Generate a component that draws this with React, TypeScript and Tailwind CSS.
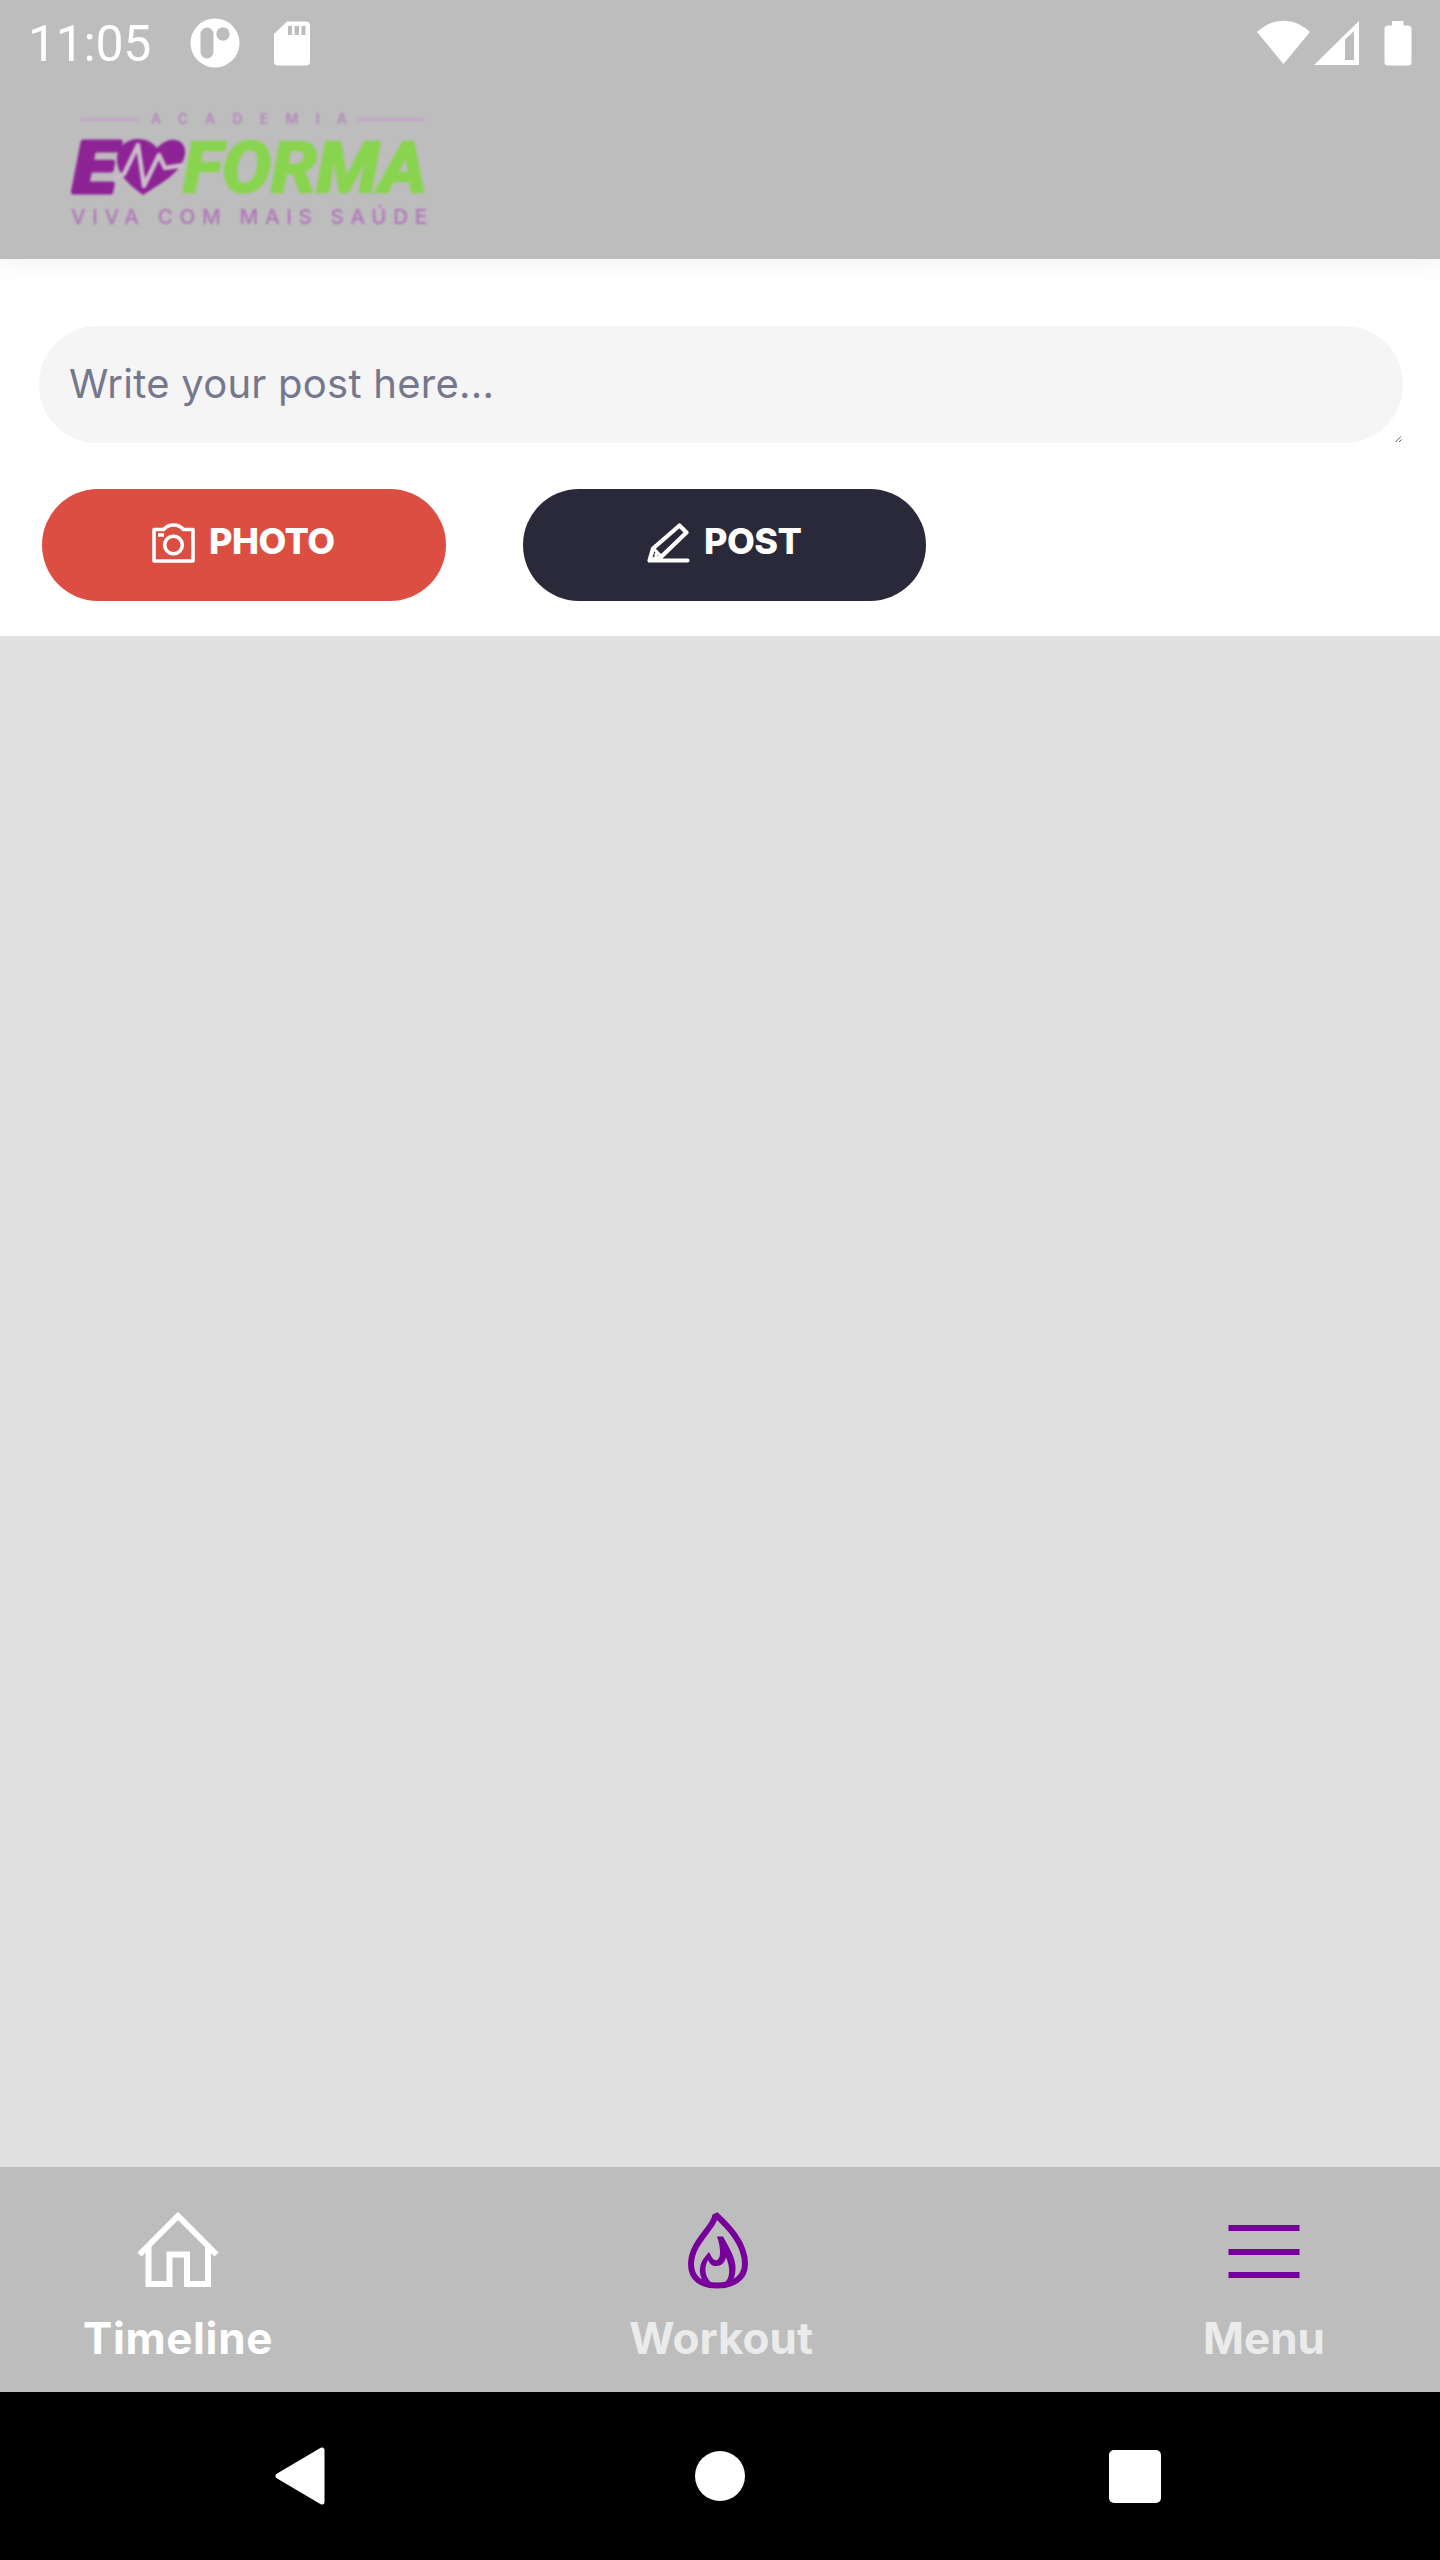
import type { ReactNode } from 'react'

function StatusBar() {
  return (
    <div className="flex h-[86px] items-center justify-between pl-7 pr-7 text-white">
      <div className="flex items-center">
        <span className="w-[162px] pt-0.5 font-['Roboto',sans-serif] text-[50px] leading-none tracking-[-0.3px]">11:05</span>
        <svg viewBox="0 0 50 50" className="h-[50px] w-[50px]" aria-hidden="true">
          <circle cx="25" cy="25" r="24.5" fill="white" />
          <rect x="10.5" y="9.5" width="13" height="31" rx="6.5" fill="#bdbdbd" />
          <circle cx="33" cy="16" r="6.7" fill="#bdbdbd" />
        </svg>
        <svg viewBox="0 0 36 45" className="ml-[34px] h-[45px] w-9" aria-hidden="true">
          <path d="M13 0.5H32a4 4 0 0 1 4 4V40.500a4 4 0 0 1-4 4H4a4 4 0 0 1-4-4V13z" fill="white" />
          <path d="M14 5h4v9h-4zM20.500 5h4.500v9h-4.500zM27.500 5h4v9h-4z" fill="#bdbdbd" />
        </svg>
      </div>
      <svg viewBox="0 0 156 48" className="h-12 w-[156px]" fill="white" aria-hidden="true">
        <path d="M1 13C17-2 38-2 54 13L27.500 45z" />
        <path fillRule="evenodd" d="M58 46L103 2V46zM89 20.500V41H98V12z" />
        <path d="M136 2h11.500v4.500H152a3.500 3.500 0 0 1 3.500 3.500V43a3.500 3.500 0 0 1-3.500 3.500H132a3.500 3.500 0 0 1-3.500-3.500V10a3.500 3.500 0 0 1 3.500-3.500h4z" />
      </svg>
    </div>
  )
}

function Logo() {
  return (
    <svg
      viewBox="60 100 380 140"
      className="ml-[60px] mt-[14px] h-[140px] w-[380px] overflow-visible font-['Inter',sans-serif] leading-none blur-[1.1px]"
    >
      <path d="M81 119.500H139M358 119.500H424" stroke="#c4a3c9" strokeWidth="3" />
      <text x="151" y="123.500" fontSize="14" fontWeight="600" fill="#b488bb" textLength="196">
        ACADEMIA
      </text>
      <g fontWeight="700" fontStyle="italic" fontSize="70" strokeWidth="5" strokeLinejoin="round" className="font-['Roboto',sans-serif]">
        <text x="73" y="192" fill="#8e2396" stroke="#8e2396" textLength="43" lengthAdjust="spacingAndGlyphs">
          E
        </text>
        <text x="183" y="192" fill="#88d44e" stroke="#88d44e" strokeWidth="2.500" textLength="244" lengthAdjust="spacingAndGlyphs">
          FORMA
        </text>
      </g>
      <path
        d="M143 195C130 185 117 175 117 159C117 147 127 139 138 139C147 139 153 143 157 148C163 142 169 139 175 140C184 141 187 150 184 158C179 174 160 184 143 195Z"
        fill="#8e2396"
      />
      <path d="M114 178L124 174L138 145L144 186L159 155L165 168L184 165" fill="none" stroke="#c9bdcb" strokeWidth="4.500" strokeLinejoin="round" />
      <text x="71" y="224" fontSize="20.500" fontWeight="500" fill="#b074b9" textLength="356">
        VIVA COM MAIS SAÚDE
      </text>
    </svg>
  )
}

function CameraIcon() {
  return (
    <svg viewBox="0 0 43 40" className="-mt-[5px] h-10 w-[43px]" fill="none" stroke="white" strokeWidth="3.600" aria-hidden="true">
      <path d="M2 6.500H11.500C14 3.500 17.500 2 21.500 2S29 3.500 31.500 6.500H41V38H2z" strokeLinejoin="round" />
      <circle cx="21.500" cy="22" r="8.800" />
      <path d="M6 12h6" strokeWidth="3.500" />
    </svg>
  )
}

function PencilIcon() {
  return (
    <svg
      viewBox="0 0 43 40"
      className="-mt-[5px] h-10 w-[43px]"
      fill="none"
      stroke="white"
      strokeWidth="4.200"
      strokeLinejoin="round"
      strokeLinecap="round"
      aria-hidden="true"
    >
      <path d="M40.500 37.500H2.500L6 25.500L32.500 2.500L39.500 9.500L14 34L2.500 37.500" />
      <path d="M7 26L14 33M9 35V31" strokeWidth="3" />
    </svg>
  )
}

function HomeIcon() {
  return (
    <svg viewBox="0 0 82 78" className="h-[78px] w-[82px]" fill="none" stroke="white" strokeWidth="6" aria-hidden="true">
      <path d="M2.500 43.500L41 5L79.500 43.500" />
      <path d="M11.500 36V73H32.500V43.500H50V73H71V36" />
    </svg>
  )
}

function FlameIcon() {
  return (
    <svg viewBox="0 -1 60 78" className="mr-[6px] h-[78px] w-[60px]" fill="none" stroke="#78009a" strokeWidth="6" aria-hidden="true">
      <path d="M27.500 2.500C27 15 3 30 3 52C3 67 14 73.500 29 73.500S57 67 57 52C57 31 40 14 27.500 2.500Z" strokeLinejoin="bevel" />
      <path
        d="M29 24.500H35C42 37 48 47 47.500 57C47.500 64 45 70 40 73L36 71C42 67 43 57 38 45C37 51 33 54 28 54C24 54 22 52 20 48C15 57 18 67 24 71L19 73C10 66 10 54 16 46L21 40C24 46 26 49 29 48C34 46 32 33 29 24.500Z"
        fill="#78009a"
        stroke="none"
      />
    </svg>
  )
}

function MenuIcon() {
  return (
    <svg viewBox="0 0 72 78" className="h-[78px] w-[72px]" stroke="#78009a" strokeWidth="6" aria-hidden="true">
      <path d="M0.500 17H71.500M0.500 41H71.500M0.500 64H71.500" />
    </svg>
  )
}

interface TabProps {
  icon: ReactNode
  label: string
  active?: boolean
}

function Tab({ icon, label, active }: TabProps) {
  return (
    <button className="flex w-48 flex-col items-center">
      {icon}
      <span
        className={`mt-[21px] text-[44px] font-bold leading-[56px] whitespace-nowrap ${active ? 'tracking-[0.6px] text-white' : 'text-[#ebebeb]'}`}
      >
        {label}
      </span>
    </button>
  )
}

export default function App() {
  return (
    <div className="flex h-[2560px] w-[1440px] flex-col overflow-hidden bg-[#e0e0e0] font-['Inter',sans-serif]">
      <header className="z-10 h-[259px] bg-[#bdbdbd] shadow-[0_2px_26px_rgba(0,0,0,0.07)]">
        <StatusBar />
        <Logo />
      </header>

      <section className="h-[377px] bg-white pt-[67px]">
        <div className="relative ml-[39px] w-[1364px]">
          <textarea
            rows={1}
            placeholder="Write your post here..."
            className="block h-[117px] w-full resize-none overflow-hidden rounded-[58px] bg-[#f5f5f5] pl-[30px] pt-[30px] text-[40px] leading-[56px] tracking-[0.25px] placeholder:text-[#75788d]"
          />
          <svg viewBox="0 0 8 8" className="absolute bottom-0 right-0 h-2 w-2" stroke="#555" aria-hidden="true">
            <path d="M0.500 7L6 1.500M4 7L6.500 4.500" />
          </svg>
        </div>
        <div className="ml-[42px] mt-[46px] flex gap-[77px] text-4xl font-extrabold text-white">
          <button className="flex h-28 w-[404px] items-center rounded-full bg-[#dc4e41] pl-[110px]">
            <CameraIcon />
            <span className="ml-[14px] -mt-2 tracking-[-0.5px]">PHOTO</span>
          </button>
          <button className="flex h-28 w-[403px] items-center rounded-full bg-[#29293a] pl-[124px]">
            <PencilIcon />
            <span className="ml-[14px] -mt-2 tracking-[-0.5px]">POST</span>
          </button>
        </div>
      </section>

      <main className="flex-1" />

      <nav className="flex h-[225px] justify-between bg-[#bdbdbd] pl-[82px] pr-20 pt-[44px]">
        <Tab icon={<HomeIcon />} label="Timeline" active />
        <Tab icon={<FlameIcon />} label="Workout" />
        <Tab icon={<MenuIcon />} label="Menu" />
      </nav>

      <div className="flex h-[168px] items-center bg-black pl-[275px]">
        <svg viewBox="0 0 50 58" className="h-[58px] w-[50px]" aria-hidden="true">
          <path d="M47 3V55L3 29z" fill="white" stroke="white" strokeWidth="5" strokeLinejoin="round" />
        </svg>
        <div className="ml-[370px] h-[50px] w-[50px] rounded-full bg-white" />
        <div className="ml-[364px] h-[53px] w-[52px] rounded-[5px] bg-white" />
      </div>
    </div>
  )
}
